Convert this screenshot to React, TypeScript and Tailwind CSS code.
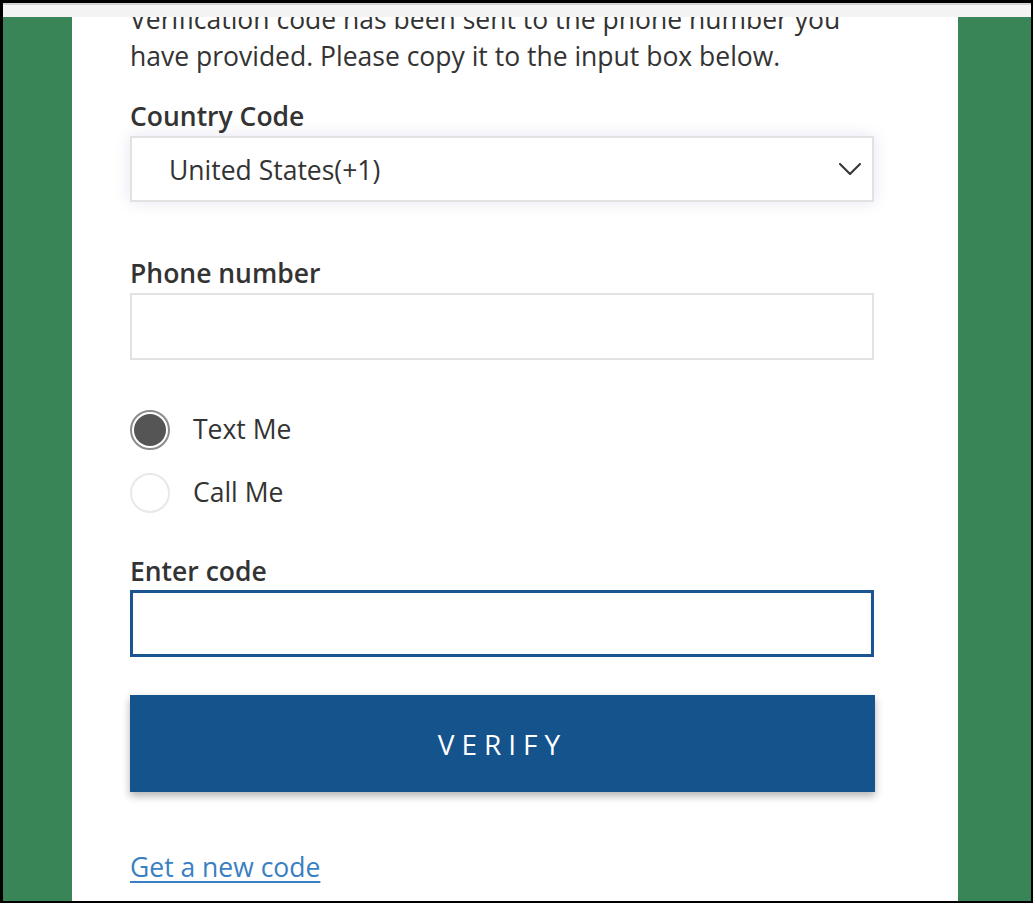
import { useState } from "react";

type Method = "text" | "call";

const FONT = { fontFamily: '"Open Sans", "Noto Sans", Arial, sans-serif' };

function Radio({
  checked,
  label,
  onSelect,
}: {
  checked: boolean;
  label: string;
  onSelect: () => void;
}) {
  return (
    <button
      type="button"
      onClick={onSelect}
      className="flex items-center gap-[23px] text-left"
    >
      {checked ? (
        <span className="flex h-[40px] w-[40px] items-center justify-center rounded-full border-2 border-[#8c8c8c] bg-white p-[2px]">
          <span className="h-full w-full rounded-full bg-[#555555]" />
        </span>
      ) : (
        <span className="h-[40px] w-[40px] rounded-full border-2 border-[#e8e8e8] bg-white" />
      )}
      <span className="pb-[2px] text-[26.5px] leading-[32px] text-[#333333]">
        {label}
      </span>
    </button>
  );
}

export default function App() {
  const [method, setMethod] = useState<Method>("text");
  const [phone, setPhone] = useState("");
  const [code, setCode] = useState("");

  return (
    <div className="h-[906px] w-[1035px] bg-white" style={FONT}>
      <div className="flex h-[903px] w-[1033px] flex-col border-b-2 border-l-[3px] border-r-2 border-t-[3px] border-black">
        {/* browser chrome strip */}
        <div className="h-[2px] shrink-0 bg-[#d2d2d2]" />
        <div className="h-[12px] shrink-0 bg-[#f3f3f3]" />

        <div className="flex min-h-0 flex-1">
          <div className="w-[69px] shrink-0 bg-[#398557]" />

          <div className="min-w-0 flex-1 overflow-hidden bg-white px-[58px]">
            <p className="mt-[-16px] text-[26.5px] leading-[37px] text-[#333333]">
              Verification code has been sent to the phone number you have
              provided. Please copy it to the input box below.
            </p>

            <label className="mt-[25px] block text-[26.5px] font-semibold leading-[32px] text-[#333333]">
              Country Code
            </label>
            <div className="mt-[4px] flex h-[66px] w-[744px] items-center justify-between border-2 border-[#e2e2e2] bg-white pl-[37px] pr-[11px] shadow-[0_0_14px_rgba(90,90,180,0.16)]">
              <span className="pt-[4px] text-[26.5px] text-[#333333]">
                United States(+1)
              </span>
              <svg width="22" height="12" viewBox="0 0 22 12" fill="none">
                <path
                  d="M1 1l10 10L21 1"
                  stroke="#333333"
                  strokeWidth="2"
                  strokeLinecap="round"
                  strokeLinejoin="round"
                />
              </svg>
            </div>

            <label className="mt-[55px] block text-[26.5px] font-semibold leading-[32px] text-[#333333]">
              Phone number
            </label>
            <input
              value={phone}
              onChange={(e) => setPhone(e.target.value)}
              className="mt-[4px] block h-[67px] w-[744px] border-2 border-[#e2e2e2] bg-white px-4 text-[26.5px] text-[#333333] outline-none"
            />

            <div className="mt-[50px] flex flex-col items-start gap-[23px]">
              <Radio
                checked={method === "text"}
                label="Text Me"
                onSelect={() => setMethod("text")}
              />
              <Radio
                checked={method === "call"}
                label="Call Me"
                onSelect={() => setMethod("call")}
              />
            </div>

            <label className="mt-[42px] block text-[26.5px] font-semibold leading-[32px] text-[#333333]">
              Enter code
            </label>
            <input
              value={code}
              onChange={(e) => setCode(e.target.value)}
              className="mt-[3px] block h-[67px] w-[744px] border-[3px] border-[#1b5591] bg-white px-4 text-[26.5px] text-[#333333] outline-none"
            />

            <button
              type="button"
              className="mt-[38px] flex h-[97px] w-[745px] items-center justify-center bg-[#14538c] text-[28px] tracking-[0.25em] text-white shadow-[0_4px_8px_rgba(0,0,0,0.3)]"
            >
              VERIFY
            </button>

            <a
              href="#"
              className="mt-[59px] inline-block text-[26.5px] leading-[32px] text-[#3a7fc2] underline underline-offset-[4px]"
            >
              Get a new code
            </a>
          </div>

          <div className="w-[73px] shrink-0 bg-[#398557]" />
        </div>
      </div>
    </div>
  );
}
